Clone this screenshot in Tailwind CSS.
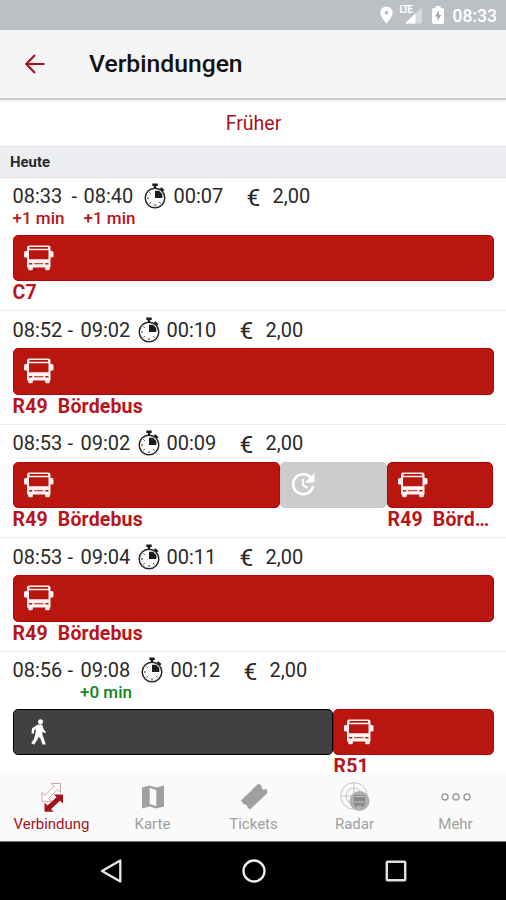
<!DOCTYPE html>
<html lang="de">
<head>
<meta charset="utf-8">
<title>Verbindungen</title>
<script src="https://cdn.jsdelivr.net/npm/@tailwindcss/browser@4"></script>
</head>
<body class="w-[506px] h-[900px] overflow-hidden bg-white font-['Roboto',sans-serif] text-[#2a2a2a]">
<svg class="hidden">
  <symbol id="bus" viewBox="0 0 30 26">
    <path fill="#fff" fill-opacity=".95" fill-rule="evenodd" d="M5 0.500H24.500Q26.500 .5 26.500 2.500V6H28Q29.500 6 29.500 7.500V11.500Q29.500 12.500 28.300 12.500H26.500V22.500H25.800V24Q25.800 25.300 24.500 25.300H22.500Q21.200 25.300 21.200 24V22.500H8.800V24Q8.800 25.300 7.500 25.300H5.500Q4.200 25.300 4.200 24V22.500H3V12.500H1.200Q0 12.500 0 11.500V7.500Q0 6 1.500 6H3V2.500Q3 .5 5 .5ZM5.500 2V3.700H24V2ZM5 5.300V14.300H24.500V5.300ZM5 18V19.600H8.200V18ZM21.300 18V19.600H24.500V18ZM10.200 18.300V19.300H19.300V18.300Z"/>
  </symbol>
  <symbol id="watch" viewBox="0 0 24 26">
    <circle cx="12" cy="15" r="9.800" fill="none" stroke="#2a2a2a" stroke-width="1.500"/>
    <path fill="#1c1c1c" d="M12 15V7.700H16L19.300 11V15ZM9.300 .5H14.700V3H13.200V5.500H10.800V3H9.300ZM18.300 4.200L21.500 7L20 8.600L16.800 5.800Z"/>
    <path stroke="#2a2a2a" d="M4 15H6M12 21V23M6.400 20.600L7.700 19.300M6.400 9.400L7.700 10.700M17.600 20.600L16.300 19.300"/>
  </symbol>
</svg>
<div class="flex flex-col h-[900px]">
  <header class="h-[30px] shrink-0 bg-[#bcc0c5] flex items-center justify-end pr-[9px] text-white">
    <svg class="w-[13px] h-[18px] mr-[7px]" viewBox="0 0 13 18"><path fill="#fff" fill-rule="evenodd" d="M6.500 0.500A6 6 0 0 1 12.700 6.700C12.700 11 6.500 17.500 6.500 17.500S.3 11 .3 6.700A6 6 0 0 1 6.500.5ZM6.500 4.800A1.900 1.900 0 1 0 6.500 8.600A1.900 1.900 0 1 0 6.500 4.800Z"/></svg>
    <div class="w-[22px] h-[20px] mr-[10px] relative">
      <svg class="w-[22px] h-[20px]" viewBox="0 0 22 20"><path fill="#fff" fill-opacity=".4" d="M22 2V18.500H5Z"/><path fill="#fff" d="M15.500 8.300V18.500H5Z"/></svg>
      <span class="absolute left-0 top-0 text-[10px] leading-[10px] font-bold tracking-[-1.400px]">LTE</span>
    </div>
    <svg class="w-[12px] h-[18px] mr-[9px]" viewBox="0 0 12 18"><path fill="#fff" d="M3.500 0H8.500V2H10.500Q12 2 12 3.500V16.500Q12 18 10.500 18H1.500Q0 18 0 16.500V3.500Q0 2 1.500 2H3.500Z"/><path fill="#9fa4aa" d="M7 4.500L3 10.500H5.500V15L9.200 9H7Z"/></svg>
    <span class="text-[17.500px] leading-[30px] font-medium pt-[2px]">08:33</span>
  </header>
  <div class="h-[70px] shrink-0 bg-[#f5f5f5] border-b-2 border-[#cbcbcb] flex items-center pl-[25px] shadow-[0_2px_2px_rgba(0,0,0,0.06)] relative">
    <svg class="w-[20px] h-[20px]" viewBox="0 0 20 20"><path fill="none" stroke="#a5131a" stroke-width="2.200" d="M19.500 10H1.500M10 1L1.300 10L10 19"/></svg>
    <h1 class="ml-[44px] text-[24.700px] leading-[30px] font-medium text-[#111]">Verbindungen</h1>
  </div>
  <div class="h-[46px] shrink-0 flex items-center justify-center pt-px pl-px text-[19.500px] text-[#a5131a]"><span>Früher</span></div>
  <div class="h-[31.500px] shrink-0 bg-[#edeef2] border-y border-[#e2e3e6] flex items-center pt-px pl-[10px] text-[14.900px] font-bold">Heute</div>
  <main class="flex-1 min-h-0 overflow-hidden text-[20px]">
    <section class="h-[133.500px] border-b border-[#ebebeb] px-[12.500px] pt-[7px]">
      <div class="flex h-[23px] items-center">
        <span class="w-[59px]">08:33</span><span class="w-[12px]">-</span><span class="w-[59px]">08:40</span>
        <svg class="w-[24px] h-[26px] mr-[7px]"><use href="#watch"/></svg><span class="w-[73px]">00:07</span><span class="w-[26px] pt-[2px] text-[24.500px] leading-[23px]">€</span><span>2,00</span>
      </div>
      <div class="flex h-[20px] items-center pt-[3px] text-[17px] font-medium text-[#b8151a]"><span class="w-[71px]">+1 min</span><span>+1 min</span></div>
      <div class="flex mt-[7px]">
        <div class="w-[482px] h-[46.500px] rounded-[5px] bg-[#b91610] border border-[#b0050a] flex items-center pl-[10px]"><svg class="w-[30px] h-[26px]"><use href="#bus"/></svg></div>
      </div>
      <div class="h-[24px] leading-[24px] text-[19.500px] tracking-[0.150px] font-bold text-[#b8151a]">C7</div>
    </section>
    <section class="h-[113.500px] border-b border-[#ebebeb] px-[12.500px] pt-[7px]">
      <div class="flex h-[23px] items-center">
        <span class="w-[55px]">08:52</span><span class="w-[13px]">-</span><span class="w-[56px]">09:02</span>
        <svg class="w-[24px] h-[26px] mr-[6px]"><use href="#watch"/></svg><span class="w-[73px]">00:10</span><span class="w-[26px] pt-[2px] text-[24.500px] leading-[23px]">€</span><span>2,00</span>
      </div>
      <div class="flex mt-[7px]">
        <div class="w-[482px] h-[46.500px] rounded-[5px] bg-[#b91610] border border-[#b0050a] flex items-center pl-[10px]"><svg class="w-[30px] h-[26px]"><use href="#bus"/></svg></div>
      </div>
      <div class="h-[24px] leading-[24px] text-[19.500px] tracking-[0.150px] font-bold text-[#b8151a] whitespace-pre">R49  Bördebus</div>
    </section>
    <section class="h-[113.500px] border-b border-[#ebebeb] px-[12.500px] pt-[7px]">
      <div class="flex h-[23px] items-center">
        <span class="w-[55px]">08:53</span><span class="w-[13px]">-</span><span class="w-[56px]">09:02</span>
        <svg class="w-[24px] h-[26px] mr-[6px]"><use href="#watch"/></svg><span class="w-[73px]">00:09</span><span class="w-[26px] pt-[2px] text-[24.500px] leading-[23px]">€</span><span>2,00</span>
      </div>
      <div class="flex mt-[7px]">
        <div class="w-[268px] h-[46.500px] rounded-[5px] bg-[#b91610] border border-[#b0050a] flex items-center pl-[10px]"><svg class="w-[30px] h-[26px]"><use href="#bus"/></svg></div>
        <div class="w-[107px] h-[46.500px] rounded-[5px] bg-[#ccc] border border-[#c6c6c6] flex items-center pl-[10px]">
          <svg class="w-[25px] h-[25px]" viewBox="0 0 25 25"><path fill="none" stroke="#fff" stroke-width="2.600" d="M19.600 5.500A10 10 0 1 0 22 14"/><path fill="none" stroke="#fff" stroke-width="2" d="M12 7V13.200L16.800 16"/><path fill="#fff" d="M23.500 1V10.500H14Z"/></svg>
        </div>
        <div class="w-[107px] h-[46.500px] rounded-[5px] bg-[#b91610] border border-[#b0050a] flex items-center pl-[10px]"><svg class="w-[30px] h-[26px]"><use href="#bus"/></svg></div>
      </div>
      <div class="flex h-[24px] leading-[24px] text-[19.500px] tracking-[0.150px] font-bold text-[#b8151a] whitespace-pre"><span class="w-[375px] shrink-0">R49  Bördebus</span><span>R49  Börd…</span></div>
    </section>
    <section class="h-[113.500px] border-b border-[#ebebeb] px-[12.500px] pt-[7px]">
      <div class="flex h-[23px] items-center">
        <span class="w-[55px]">08:53</span><span class="w-[13px]">-</span><span class="w-[56px]">09:04</span>
        <svg class="w-[24px] h-[26px] mr-[6px]"><use href="#watch"/></svg><span class="w-[73px]">00:11</span><span class="w-[26px] pt-[2px] text-[24.500px] leading-[23px]">€</span><span>2,00</span>
      </div>
      <div class="flex mt-[7px]">
        <div class="w-[482px] h-[46.500px] rounded-[5px] bg-[#b91610] border border-[#b0050a] flex items-center pl-[10px]"><svg class="w-[30px] h-[26px]"><use href="#bus"/></svg></div>
      </div>
      <div class="h-[24px] leading-[24px] text-[19.500px] tracking-[0.150px] font-bold text-[#b8151a] whitespace-pre">R49  Bördebus</div>
    </section>
    <section class="h-[133.500px] px-[12.500px] pt-[7px]">
      <div class="flex h-[23px] items-center">
        <span class="w-[55px]">08:56</span><span class="w-[13px]">-</span><span class="w-[59px]">09:08</span>
        <svg class="w-[24px] h-[26px] mr-[7px]"><use href="#watch"/></svg><span class="w-[73px]">00:12</span><span class="w-[26px] pt-[2px] text-[24.500px] leading-[23px]">€</span><span>2,00</span>
      </div>
      <div class="flex h-[20px] items-center pt-[3px] pl-[67.500px] text-[17px] font-medium text-[#12851a]">+0 min</div>
      <div class="flex mt-[7px]">
        <div class="w-[321px] h-[46.500px] rounded-[5px] bg-[#414141] border border-black flex items-center pl-[16px]">
          <svg class="w-[18px] h-[26px]" viewBox="0 0 18 26"><circle cx="10.500" cy="2.800" r="2.500" fill="#fff"/><path fill="#fff" d="M7.500 5.800L11 5.300Q12.500 5.800 13 8L13.800 10.800L16 13L15 14.300L12.500 12.800L12.300 15.500L13.800 19.500L15.800 25.500H12.500L10.800 20.500L8.800 17.500L7.200 21L4 25.800L1.200 24L4.200 19.500L5.500 14L5.800 10L4.200 11.500L3.800 14.800L1.500 14.200L2 9.300Z"/></svg>
        </div>
        <div class="w-[161px] h-[46.500px] rounded-[5px] bg-[#b91610] border border-[#b0050a] flex items-center pl-[10px]"><svg class="w-[30px] h-[26px]"><use href="#bus"/></svg></div>
      </div>
      <div class="h-[24px] leading-[24px] pl-[321px] text-[19.500px] tracking-[0.150px] font-bold text-[#b8151a]">R51</div>
    </section>
  </main>
  <nav class="h-[70px] shrink-0 bg-[#fafafa] border-b border-[#777] grid grid-cols-5 text-[15px] leading-[18px] text-[#a0a0a0] pt-[9px] pl-px">
    <div class="flex flex-col items-center text-[#a5131a]">
      <svg class="w-[24px] h-[32px] mb-[2px]" viewBox="0 0 24 32"><path fill="#fff" stroke="#d9a0a3" stroke-width="1" d="M11.500 2.500H20.500V11.500L17.500 8.700L8.500 17.500L11.500 20.300H2V11.500L5 14.300L14.300 5.300Z"/><path fill="#a5131a" d="M14 13.500H23V22.500L20 19.800L11 28L13.500 30.700H4.500V21.700L7.500 24.500L16.500 16.300Z"/></svg>
      <span>Verbindung</span>
    </div>
    <div class="flex flex-col items-center">
      <svg class="w-[24px] h-[32px] mb-[2px]" viewBox="0 0 24 32"><path fill="#a0a0a0" fill-rule="evenodd" d="M1 6.500L8.500 4.500L15.500 6.500L23 4.500V25.500L15.500 27.500L8.500 25.500L1 27.500ZM8.700 7V23L15.300 25V9Z"/></svg>
      <span>Karte</span>
    </div>
    <div class="flex flex-col items-center">
      <svg class="w-[28px] h-[32px] mb-[2px]" viewBox="0 0 28 32"><path fill="#a0a0a0" d="M18.500 2.500L21.500 4.500Q20.800 8 23.500 8.800L26.500 8L27.500 12L10 28.500L7.500 26.500Q7.500 23 4 23.500L1 19.500Z"/></svg>
      <span>Tickets</span>
    </div>
    <div class="flex flex-col items-center">
      <svg class="w-[30px] h-[32px] mb-[2px]" viewBox="0 0 30 32"><g fill="none" stroke="#c4c4c4"><circle cx="14" cy="15" r="13.300"/><circle cx="14" cy="15" r="8"/><path d="M14 1V15M1 15H14"/></g><circle cx="19.500" cy="20" r="10" fill="#b0b0b0"/><path fill="#8a8a8a" d="M14 14H25V24.500H24V26H22V24.500H17V26H15V24.500H14Z"/><path stroke="#c4c4c4" d="M14.500 15.500H24.500M14.500 21H24.500"/></svg>
      <span>Radar</span>
    </div>
    <div class="flex flex-col items-center">
      <svg class="w-[32px] h-[32px] mb-[2px]" viewBox="0 0 32 32"><g fill="none" stroke="#a0a0a0" stroke-width="1.500"><circle cx="5" cy="16" r="3"/><circle cx="16" cy="16" r="3"/><circle cx="27" cy="16" r="3"/></g></svg>
      <span>Mehr</span>
    </div>
  </nav>
  <footer class="h-[58px] shrink-0 bg-black flex items-center pl-[100px]">
    <svg class="w-[22px] h-[24px]" viewBox="0 0 22 24"><path fill="none" stroke="#e8e8e8" stroke-width="2.300" stroke-linejoin="round" d="M20.300 1.500V22.500L2 12Z"/></svg>
    <svg class="w-[24px] h-[24px] ml-[120px]" viewBox="0 0 24 24"><circle cx="12" cy="12" r="10.500" fill="none" stroke="#f0f0f0" stroke-width="2.300"/></svg>
    <svg class="w-[22px] h-[22px] ml-[119px]" viewBox="0 0 22 22"><rect x="1.800" y="1.800" width="18.400" height="18.400" rx=".8" fill="none" stroke="#e0e0e0" stroke-width="2.500"/></svg>
  </footer>
</div>
</body>
</html>
